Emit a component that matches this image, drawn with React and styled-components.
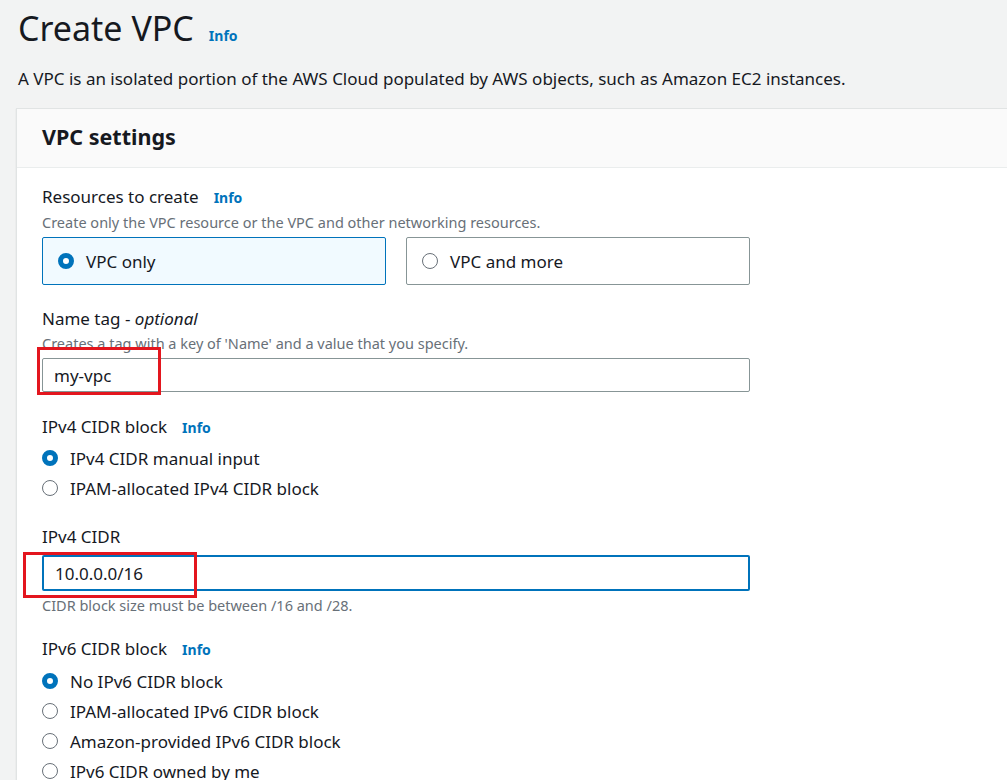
import React from "react";
import styled, { createGlobalStyle } from "styled-components";

const GlobalStyle = createGlobalStyle`
  html, body {
    margin: 0;
    padding: 0;
    background: #f2f3f3;
    font-family: "Noto Sans", "Open Sans", Arial, sans-serif;
    color: #16191f;
    overflow: hidden;
  }
`;

const Page = styled.div`
  width: 1007px;
  height: 780px;
  overflow: hidden;
  padding: 0 0 0 16px;
  box-sizing: border-box;
`;

const TitleRow = styled.div`
  display: flex;
  align-items: baseline;
  gap: 15px;
  padding: 4px 0 0 2px;
  height: 50px;
`;

const Title = styled.h1`
  margin: 0;
  font-size: 34px;
  font-weight: 400;
  line-height: 48px;
  color: #16191f;
`;

const InfoLink = styled.a`
  font-size: 14px;
  font-weight: 700;
  color: #0073bb;
  text-decoration: none;
`;

const Lead = styled.p`
  margin: 13px 0 0 2px;
  font-size: 17px;
  line-height: 24px;
  color: #16191f;
`;

const Card = styled.section`
  margin-top: 17px;
  width: 1040px;
  background: #fff;
  border: 1px solid #e1e4e4;
  border-right: none;
  box-shadow: 0 1px 1px rgba(0, 28, 36, 0.15);
`;

const CardHeader = styled.div`
  height: 59px;
  display: flex;
  align-items: center;
  padding: 0 25px 3px;
  box-sizing: border-box;
  background: #fafafa;
  border-bottom: 1px solid #eaeded;
`;

const CardTitle = styled.h2`
  margin: 0;
  font-size: 21.5px;
  font-weight: 700;
  color: #16191f;
`;

const CardBody = styled.div`
  padding: 18px 25px 40px;
  width: 708px;
`;

const Field = styled.div`
  margin-bottom: ${(p) => p.gap || 23}px;
`;

const Label = styled.div`
  font-size: 17px;
  line-height: 22px;
  color: #16191f;
  display: flex;
  align-items: baseline;
  gap: 15px;

  em {
    font-style: italic;
  }
`;

const Hint = styled.div`
  font-size: 14.5px;
  line-height: 20px;
  color: #687078;
  margin-top: ${(p) => p.top || 3}px;
`;

const Tiles = styled.div`
  display: grid;
  grid-template-columns: 1fr 1fr;
  gap: 20px;
  margin-top: 5px;
`;

const Tile = styled.div`
  height: 48px;
  box-sizing: border-box;
  display: flex;
  align-items: center;
  gap: 12px;
  padding-left: 15px;
  border: 1px solid ${(p) => (p.selected ? "#0073bb" : "#879596")};
  background: ${(p) => (p.selected ? "#f1faff" : "#fff")};
  border-radius: 2px;
  font-size: 17px;
`;

const Radio = styled.span`
  width: 16px;
  height: 16px;
  box-sizing: border-box;
  border-radius: 50%;
  flex: none;
  border: ${(p) => (p.checked ? "5px solid #0073bb" : "1.5px solid #687078")};
  background: #fff;
`;

const Options = styled.div`
  margin-top: ${(p) => p.top || 4}px;
`;

const Option = styled.div`
  height: 30px;
  display: flex;
  align-items: center;
  gap: 12px;
  font-size: 17px;
`;

const InputWrap = styled.div`
  position: relative;
  margin-top: ${(p) => p.top || 5}px;
`;

const Input = styled.div`
  height: ${(p) => (p.focused ? 36 : 34)}px;
  box-sizing: border-box;
  display: flex;
  align-items: center;
  padding-left: 11px;
  border: ${(p) => (p.focused ? "2px solid #0073bb" : "1px solid #879596")};
  border-radius: 2px;
  font-size: 17px;
  background: #fff;
`;

const Highlight = styled.div`
  position: absolute;
  border: 3px solid #e3161e;
  box-sizing: border-box;
  pointer-events: none;
`;

export default function App() {
  return (
    <>
      <GlobalStyle />
      <Page>
        <TitleRow>
          <Title>Create VPC</Title>
          <InfoLink>Info</InfoLink>
        </TitleRow>
        <Lead>
          A VPC is an isolated portion of the AWS Cloud populated by AWS objects, such as Amazon EC2 instances.
        </Lead>
        <Card>
          <CardHeader>
            <CardTitle>VPC settings</CardTitle>
          </CardHeader>
          <CardBody>
            <Field>
              <Label>
                Resources to create <InfoLink>Info</InfoLink>
              </Label>
              <Hint>Create only the VPC resource or the VPC and other networking resources.</Hint>
              <Tiles>
                <Tile selected>
                  <Radio checked />
                  VPC only
                </Tile>
                <Tile>
                  <Radio />
                  VPC and more
                </Tile>
              </Tiles>
            </Field>

            <Field gap={24}>
              <Label>
                <span>
                  Name tag - <em>optional</em>
                </span>
              </Label>
              <Hint>Creates a tag with a key of 'Name' and a value that you specify.</Hint>
              <InputWrap>
                <Input>my-vpc</Input>
                <Highlight style={{ left: -5, top: -11, width: 124, height: 48 }} />
              </InputWrap>
            </Field>

            <Field>
              <Label>
                IPv4 CIDR block <InfoLink>Info</InfoLink>
              </Label>
              <Options>
                <Option>
                  <Radio checked />
                  IPv4 CIDR manual input
                </Option>
                <Option>
                  <Radio />
                  IPAM-allocated IPv4 CIDR block
                </Option>
              </Options>
            </Field>

            <Field>
              <Label>IPv4 CIDR</Label>
              <InputWrap top={7}>
                <Input focused>10.0.0.0/16</Input>
                <Highlight style={{ left: -19, top: -3, width: 174, height: 46 }} />
              </InputWrap>
              <Hint top={4}>CIDR block size must be between /16 and /28.</Hint>
            </Field>

            <Field>
              <Label>
                IPv6 CIDR block <InfoLink>Info</InfoLink>
              </Label>
              <Options top={5}>
                <Option>
                  <Radio checked />
                  No IPv6 CIDR block
                </Option>
                <Option>
                  <Radio />
                  IPAM-allocated IPv6 CIDR block
                </Option>
                <Option>
                  <Radio />
                  Amazon-provided IPv6 CIDR block
                </Option>
                <Option>
                  <Radio />
                  IPv6 CIDR owned by me
                </Option>
              </Options>
            </Field>
          </CardBody>
        </Card>
      </Page>
    </>
  );
}
